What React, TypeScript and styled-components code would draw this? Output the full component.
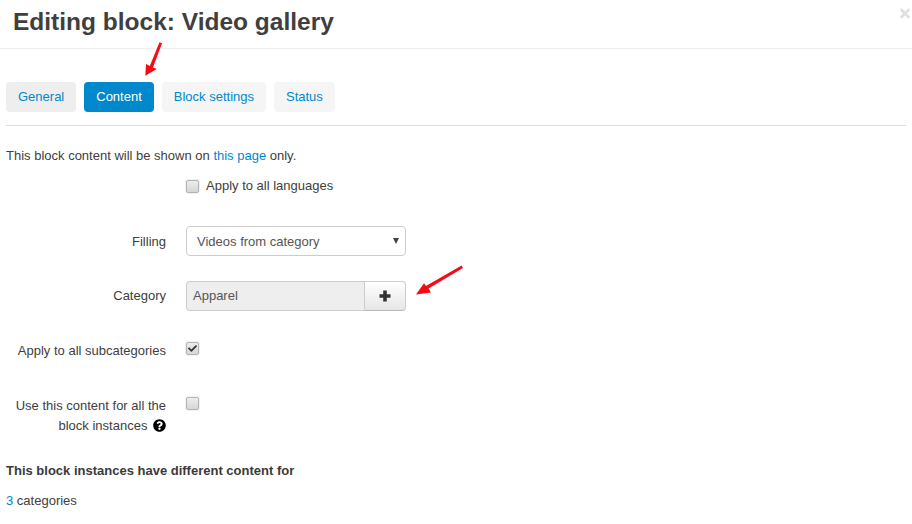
import { createGlobalStyle, styled } from "styled-components";
import { FaCheck, FaQuestionCircle, FaTimes } from "react-icons/fa";

const GlobalStyle = createGlobalStyle`
  html, body {
    margin: 0;
    padding: 0;
    background: #fff;
  }
  body {
    font-family: "Liberation Sans", Arial, sans-serif;
    font-size: 13px;
    line-height: 20px;
    color: #404040;
  }
`;

const Page = styled.div`
  position: relative;
  width: 912px;
  height: 524px;
  overflow: hidden;
`;

const Header = styled.header`
  height: 48px;
  border-bottom: 1px solid #eee;
  padding-left: 13px;
  display: flex;
  align-items: center;
`;

const Title = styled.h1`
  margin: 0 0 5px;
  font-size: 24.5px;
  line-height: 30px;
  font-weight: 700;
  color: #3f3f3f;
`;

const CloseIcon = styled(FaTimes)`
  position: absolute;
  top: 6px;
  right: 2px;
  width: 10px;
  height: 15px;
  color: #e0e0e0;
`;

const Body = styled.main`
  padding: 33px 6px 0;
`;

const Tabs = styled.nav`
  display: flex;
  gap: 8px;
  padding-bottom: 13px;
  border-bottom: 1px solid #ddd;
`;

const Tab = styled.a<{ $state?: "active" | "hover" }>`
  height: 30px;
  line-height: 30px;
  padding: 0 12px;
  border-radius: 4px;
  color: ${(p) => (p.$state === "active" ? "#fff" : "#0088cc")};
  background: ${(p) =>
    p.$state === "active" ? "#0088cc" : p.$state === "hover" ? "#eeeeee" : "#f5f5f5"};
`;

const Intro = styled.p`
  margin: 20px 0 0;
  line-height: 20px;
`;

const Link = styled.a`
  color: #0088cc;
`;

const FormRow = styled.div<{ $top: number }>`
  display: grid;
  grid-template-columns: 160px 1fr;
  column-gap: 20px;
  margin-top: ${(p) => p.$top}px;
`;

const Label = styled.label<{ $pad?: number }>`
  text-align: right;
  line-height: 20px;
  padding-top: ${(p) => p.$pad ?? 5}px;
`;

const CheckLabel = styled.label`
  display: flex;
  align-items: center;
  gap: 7px;
  line-height: 20px;
`;

const CheckBox = styled.span`
  width: 11px;
  height: 11px;
  border: 1px solid #b4b4b4;
  border-radius: 2px;
  background: linear-gradient(#ededed, #d6d6d6);
  box-shadow: 0 0 0 1px #f1f1f1;
  display: inline-flex;
  align-items: center;
  justify-content: center;
  flex: none;
  color: #333;
`;

const CheckCell = styled.div`
  display: flex;
  align-items: flex-start;
  height: 20px;
  padding-top: 6px;
`;

const SelectBox = styled.div`
  width: 220px;
  height: 30px;
  box-sizing: border-box;
  border: 1px solid #ccc;
  border-radius: 4px;
  background: #fff;
  color: #555;
  padding: 1px 0 0 10px;
  display: flex;
  align-items: center;
  justify-content: space-between;
`;

const Caret = styled.span`
  width: 0;
  height: 0;
  margin: -1px 6px 0 0;
  border-left: 3px solid transparent;
  border-right: 3px solid transparent;
  border-top: 6px solid #444;
`;

const PickerGroup = styled.div`
  display: flex;
  width: 220px;
  height: 30px;
`;

const PickerInput = styled.div`
  flex: 1;
  box-sizing: border-box;
  border: 1px solid #ccc;
  border-right: 0;
  border-radius: 4px 0 0 4px;
  background: #eeeeee;
  color: #555;
  padding-left: 6px;
  line-height: 28px;
`;

const PickerButton = styled.button`
  width: 42px;
  box-sizing: border-box;
  border: 1px solid #ccc;
  border-bottom-color: #b8b8b8;
  border-radius: 0 4px 4px 0;
  background: linear-gradient(#ffffff, #e6e6e6);
  color: #333;
  padding: 0;
  display: flex;
  align-items: center;
  justify-content: center;
`;

const HelpIcon = styled(FaQuestionCircle)`
  width: 13px;
  height: 13px;
  color: #000;
  vertical-align: -2px;
  margin-left: 2px;
`;

const Subhead = styled.h4`
  margin: 25px 0 0;
  font-size: 13px;
  line-height: 20px;
  font-weight: 700;
  color: #3a3a3a;
`;

const Footnote = styled.p`
  margin: 10px 0 0;
  line-height: 20px;
`;

const Arrow = styled.svg<{ $left: number; $top: number }>`
  position: absolute;
  left: ${(p) => p.$left}px;
  top: ${(p) => p.$top}px;
`;

export default function App() {
  return (
    <Page>
      <GlobalStyle />
      <Header>
        <Title>Editing block: Video gallery</Title>
      </Header>
      <CloseIcon />
      <Body>
        <Tabs>
          <Tab $state="hover">General</Tab>
          <Tab $state="active">Content</Tab>
          <Tab>Block settings</Tab>
          <Tab>Status</Tab>
        </Tabs>
        <Intro>
          This block content will be shown on <Link>this page</Link> only.
        </Intro>
        <FormRow $top={10}>
          <span />
          <CheckLabel>
            <CheckBox />
            Apply to all languages
          </CheckLabel>
        </FormRow>
        <FormRow $top={30}>
          <Label $pad={6}>Filling</Label>
          <SelectBox>
            Videos from category
            <Caret />
          </SelectBox>
        </FormRow>
        <FormRow $top={25}>
          <Label>Category</Label>
          <PickerGroup>
            <PickerInput>Apparel</PickerInput>
            <PickerButton>
              <svg width={12} height={12} viewBox="0 0 12 12">
                <path d="M4.2 0.5h3.6v3.7h3.7v3.6H7.8v3.7H4.2V7.8H0.5V4.2h3.7z" fill="#333" />
              </svg>
            </PickerButton>
          </PickerGroup>
        </FormRow>
        <FormRow $top={25}>
          <Label>Apply to all subcategories</Label>
          <CheckCell>
            <CheckBox>
              <FaCheck size={9} />
            </CheckBox>
          </CheckCell>
        </FormRow>
        <FormRow $top={29}>
          <Label>
            Use this content for all the block instances <HelpIcon />
          </Label>
          <CheckCell>
            <CheckBox />
          </CheckCell>
        </FormRow>
        <Subhead>This block instances have different content for</Subhead>
        <Footnote>
          <Link>3</Link> categories
        </Footnote>
      </Body>
      <Arrow $left={140} $top={38} width={30} height={42} viewBox="0 0 30 42">
        <path d="M19.5 4.2 L22 5.3 L13 29.5 L16.8 31 L5.3 37.8 L6 26 L9.8 28 Z" fill="#f80a14" />
      </Arrow>
      <Arrow $left={410} $top={260} width={60} height={40} viewBox="0 0 60 40">
        <path d="M51.6 5.6 L53 8 L18.5 28.5 L21 32.5 L6 34.4 L14 23.3 L16 26 Z" fill="#f80a14" />
      </Arrow>
    </Page>
  );
}
